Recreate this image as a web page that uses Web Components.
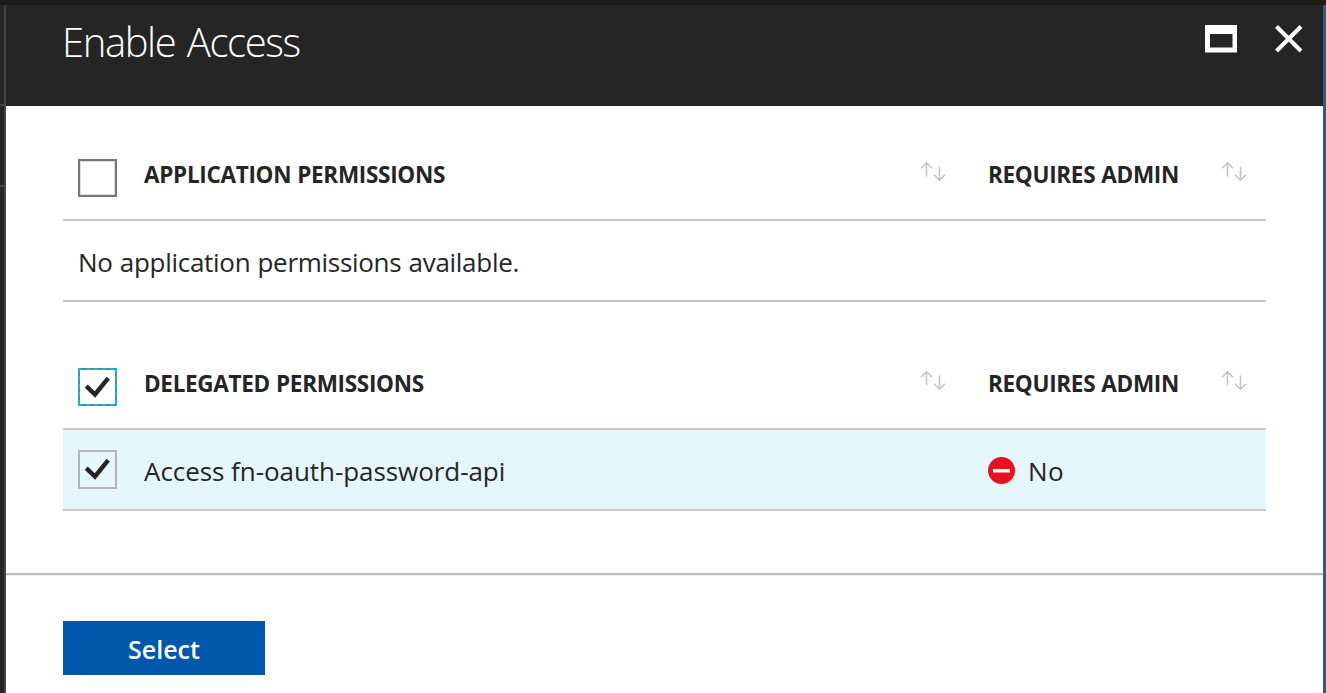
<!DOCTYPE html>
<html lang="en"><head><meta charset="utf-8"><title>Enable Access</title>
<style>
html,body{margin:0;height:100%;overflow:hidden}
body{font-family:"Open Sans","Noto Sans",sans-serif;color:#252525;background:#1c1c1c}
</style></head><body>
<access-blade></access-blade>
<script>
const define=(name,html)=>customElements.define(name,class extends HTMLElement{
  constructor(){super();const t=document.createElement('template');t.innerHTML=html;
    this.attachShadow({mode:'open'}).append(t.content.cloneNode(true));}
});

define('sort-icon',`<style>:host{display:block;width:27px;height:21px}svg{display:block}</style>
<svg width="27" height="21" viewBox="0 0 27 21" fill="none" stroke="#c4c4c4" stroke-width="1.5"><path d="M6.5 15.5V2M1 7.2L6.5 1.7L12 7.2M19.5 5.5V19M14 13.8L19.5 19.3L25 13.8"/></svg>`);

define('check-box',`<style>
:host{display:block;box-sizing:border-box;width:39px;height:38px;border:2px solid #777;background:#fff;box-shadow:inset 0 0 0 1px #ddd}
:host([tall]){height:39px;border-color:#b5b5b5;background:#e5f7fd;box-shadow:none}
:host([focused]){border:0;box-shadow:none}
svg{display:none}:host([checked]) svg{display:block}
.ring{display:none}:host([focused]) .ring{display:inline}
:host(:not([focused])) svg{margin:-2px}
</style>
<svg width="39" height="38" viewBox="0 0 39 38" fill="none">
<g class="ring"><rect x="1" y="1" width="37" height="36" stroke="#777" stroke-width="2"/><path d="M0 1H39M0 37H39M1 0V38M38 0V38" stroke="#00bcf2" stroke-width="2" stroke-dasharray="4.5 3.5"/></g>
<path d="M8.2 18.2L17 26.5L30.2 10.2" stroke="#252525" stroke-width="4.4"/></svg>`);

define('perm-row',`<style>
:host{display:grid;grid-template-columns:66px 776px 68px 233px 45px;padding-left:15px;box-sizing:border-box;height:var(--h);border-bottom:2px solid #c8c8c8;width:1203px}
:host([selected]){background:#e5f7fd}
::slotted(*){align-self:start}
</style>
<slot name="box"></slot><slot name="name"></slot><slot name="sort1"><span></span></slot><slot name="admin"></slot><slot name="sort2"></slot>`);

define('head-row',`<style>
:host{display:block}
check-box{margin-top:15px}
b{font-size:22.5px;line-height:30px;font-weight:700;white-space:nowrap;margin-top:16px;letter-spacing:-.3px;word-spacing:.5px}
sort-icon{margin-top:17px}
perm-row{--h:77px}
</style>
<perm-row><check-box slot="box"></check-box><b slot="name"><slot></slot></b><sort-icon slot="sort1"></sort-icon><b slot="admin">REQUIRES ADMIN</b><sort-icon slot="sort2"></sort-icon></perm-row>`);

define('no-mark',`<style>:host{display:flex;align-items:center;gap:13px}svg{margin-bottom:2px}span{font-size:26px;line-height:36px;letter-spacing:.4px}</style>
<svg width="27" height="27" viewBox="0 0 27 27"><circle cx="13.5" cy="13.5" r="13.5" fill="#e81123"/><rect x="5" y="12" width="17" height="3.5" fill="#fff"/></svg><span>No</span>`);

define('blade-header',`<style>
:host{display:flex;height:101px;background:#252525;box-sizing:border-box;padding:0 20px 0 56px;color:#fff;align-items:flex-start}
h1{margin:10px auto 0 0;font-size:40px;line-height:54px;font-weight:300;letter-spacing:-1.4px;word-spacing:2.5px;white-space:nowrap}
svg{display:block}
.m{margin:20px 37px 0 0}.x{margin-top:20px}
</style><h1>Enable Access</h1>
<svg class="m" width="32" height="28" viewBox="0 0 32 28"><path d="M0 0H32V27.5H0ZM5 9V22.5H27.5V9Z" fill="#fff" fill-rule="evenodd"/></svg>
<svg class="x" width="29" height="28" viewBox="0 0 29 28"><path d="M2.5 1.5L27 26M27 1.5L2.5 26" stroke="#fff" stroke-width="4" fill="none"/></svg>`);

define('side-rail',`<style>
:host{display:flex;flex-direction:column;width:6px;box-sizing:border-box;background:#252525;border-right:2px solid #444}
i{height:2px;background:#444}.a{margin-top:99px}.b{margin-top:79px}
</style><i class="a"></i><i class="b"></i>`);

define('access-blade',`<style>
:host{display:grid;grid-template-columns:6px 1317px 3px;width:1326px;height:693px;padding-top:5px;box-sizing:border-box}
main{background:#fff;display:flex;flex-direction:column}
.edge{background:#2b5f82}
.tables{padding:38px 0 0 57px;height:469px;box-sizing:border-box;border-bottom:2px solid #bcbcbc;flex:none;box-shadow:0 1px #eee}
.empty{height:81px;box-sizing:border-box;border-bottom:2px solid #c8c8c8;width:1203px;padding:23px 0 0 15px;font-size:26px;line-height:36px;letter-spacing:-.29px;word-spacing:.7px;white-space:nowrap}
.second{margin-top:51px}
perm-row{--h:81px}
.r{margin-top:20px}
.t{font-size:26px;line-height:36px;margin-top:23px;white-space:nowrap;letter-spacing:-.06px}
no-mark{margin-top:23px}
button{margin:46px 0 0 57px;width:202px;height:54px;padding:2px 0 0;border:0;background:#0058ad;color:#fff;font:600 25px/36px "Open Sans","Noto Sans",sans-serif}
</style>
<side-rail></side-rail>
<main><blade-header></blade-header>
<section class="tables">
<head-row class="first">APPLICATION PERMISSIONS</head-row>
<div class="empty">No application permissions available.</div>
<head-row class="second" checked>DELEGATED PERMISSIONS</head-row>
<perm-row selected><check-box class="r" slot="box" tall checked></check-box><span class="t" slot="name">Access fn-oauth-password-api</span><span slot="sort1"></span><no-mark slot="admin"></no-mark><span slot="sort2"></span></perm-row>
</section>
<div><button>Select</button></div></main>
<div class="edge"></div>`);

const blade=document.querySelector('access-blade').shadowRoot;
const box=blade.querySelector('head-row[checked]').shadowRoot.querySelector('check-box');
box.setAttribute('checked','');box.setAttribute('focused','');
</script></body></html>
